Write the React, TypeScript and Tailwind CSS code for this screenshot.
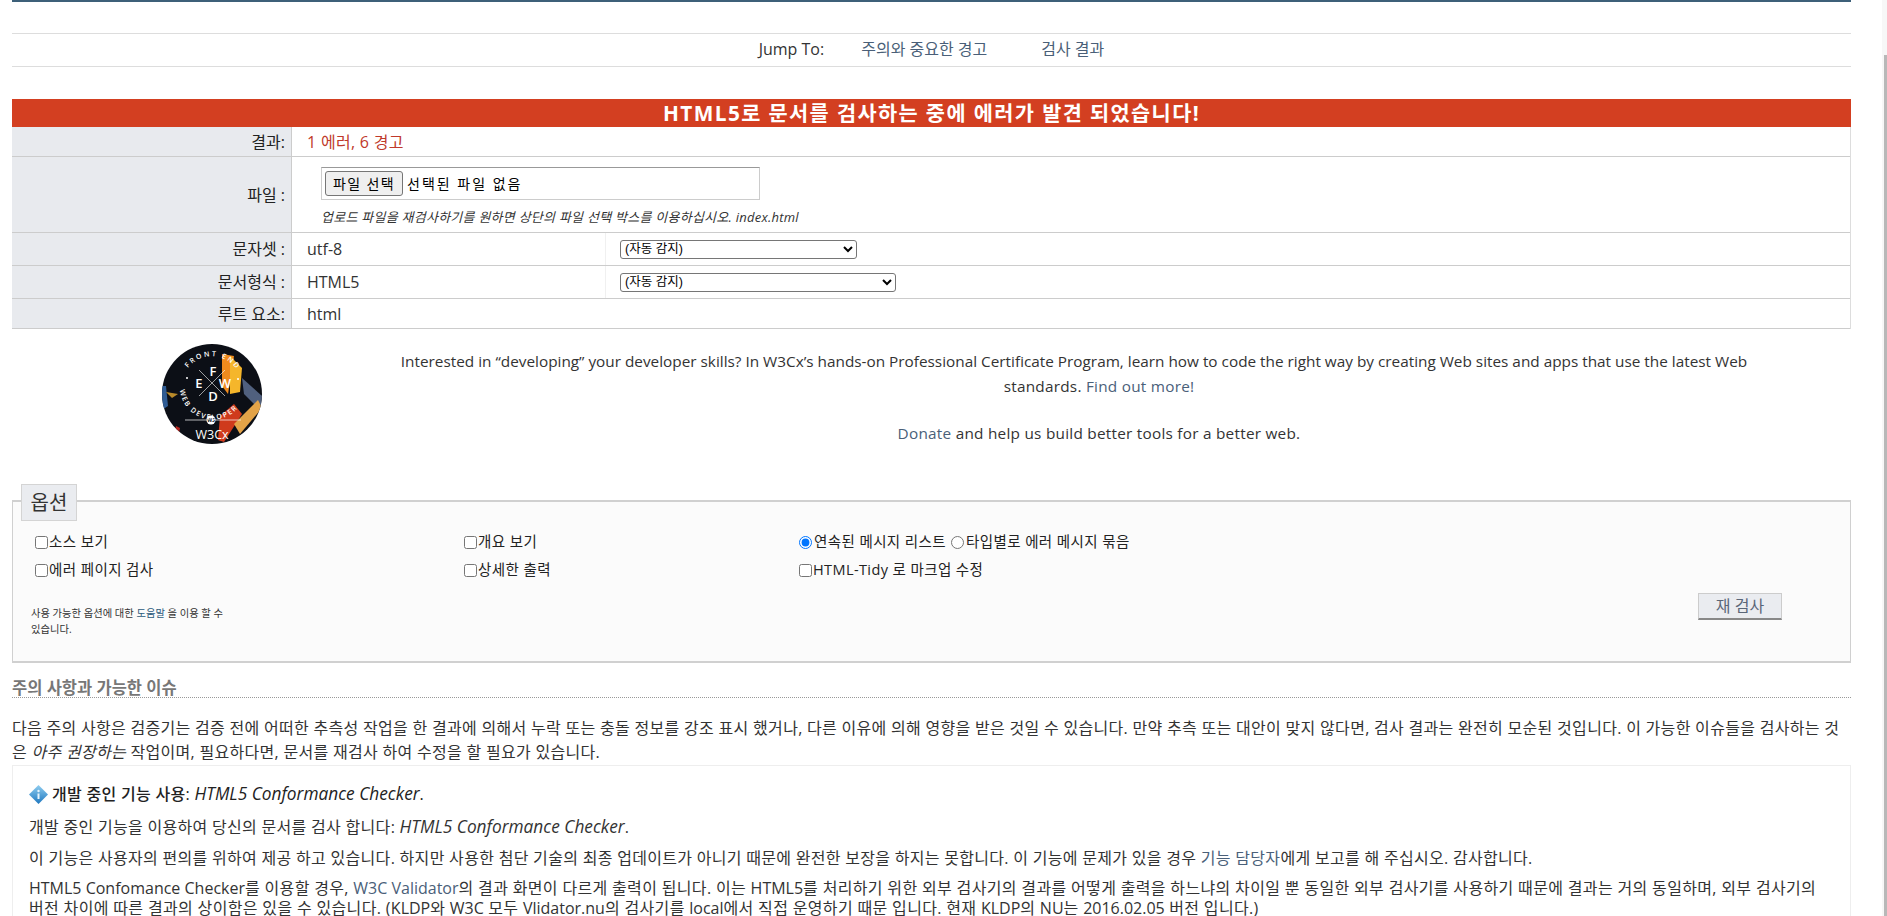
const font = "font-['Open_Sans','Noto_Sans_CJK_KR',sans-serif]";

function Row({ label, height, children }: { label: string; height: string; children: React.ReactNode }) {
  return (
    <div className={`flex border-b border-[#cccccc] ${height}`}>
      <div className="w-[280px] shrink-0 bg-[#e8eaee] border-r border-[#cccccc] flex items-center justify-end pr-[6px] text-[16px] text-[#222222]">
        {label}
      </div>
      <div className="flex-1 flex items-center text-[16px] text-[#333333]">{children}</div>
    </div>
  );
}

// latin runs inside the korean paragraphs sit at their own size
function Latin({ children }: { children: React.ReactNode }) {
  return <span className="text-[16px] tracking-normal">{children}</span>;
}

function Wide({ children }: { children: React.ReactNode }) {
  return <em className="text-[17.3px] tracking-normal">{children}</em>;
}

function Check({ children }: { children: React.ReactNode }) {
  return (
    <label className="flex items-center h-[16px] gap-[1px]">
      <input type="checkbox" className="w-[13px] h-[13px] m-0" />
      {children}
    </label>
  );
}

function Logo() {
  return (
    <svg width="100" height="100" viewBox="0 0 100 100">
      <defs>
        <clipPath id="c">
          <circle cx="50" cy="50" r="50" />
        </clipPath>
      </defs>
      <g clipPath="url(#c)">
        <rect width="100" height="100" fill="#0c0f16" />
        <polygon points="60,10 72,12 66,50 60,42" fill="#f08a1d" />
        <polygon points="68,12 80,24 78,48 68,50" fill="#f5b62b" />
        <polygon points="80,34 100,52 100,68 82,50" fill="#50607e" />
        <polygon points="58,72 72,60 80,70 62,98 56,96" fill="#cf3a1c" />
        <polygon points="72,80 96,56 100,64 78,90" fill="#e3a348" />
        <polygon points="0,42 4,42 6,62 0,66" fill="#2f5c94" />
        <polygon points="4,48 16,50 10,54" fill="#b98a2a" />
        <polygon points="14,82 18,84 16,94 12,92" fill="#b5241f" />
      </g>
      <line x1="37" y1="26" x2="63" y2="52" stroke="#ffffff" strokeWidth="0.6" />
      <line x1="63" y1="26" x2="37" y2="52" stroke="#ffffff" strokeWidth="0.6" />
      <line x1="23" y1="76" x2="79" y2="76" stroke="#ffffff" strokeWidth="0.7" />
      <circle cx="49" cy="76" r="4.5" fill="#ffffff" />
      <text x="49" y="78" fontSize="5" fontWeight="700" fontFamily="Open Sans" textAnchor="middle" fill="#0c0f16">W3</text>
      <circle cx="25" cy="34" r="1" fill="#ffffff" />
      <circle cx="76" cy="35" r="1" fill="#ffffff" />
      <g fill="#ffffff" fontFamily="Open Sans" fontWeight="600" textAnchor="middle">
        <text x="51" y="32" fontSize="13">F</text>
        <text x="37" y="44" fontSize="13">E</text>
        <text x="63" y="44" fontSize="13">W</text>
        <text x="51" y="57" fontSize="13">D</text>
        <text x="50" y="95" fontSize="12.5" fontWeight="400">W3Cx</text>
      </g>
      <path id="t" d="M 26 24 A 30 30 0 0 1 78 32" fill="none" />
      <path id="b" d="M 18 46 A 33 33 0 0 0 83 50" fill="none" />
      <text fill="#ffffff" fontFamily="Open Sans" fontWeight="600" fontSize="7" letterSpacing="2">
        <textPath href="#t">FRONT END</textPath>
      </text>
      <text fill="#ffffff" fontFamily="Open Sans" fontWeight="600" fontSize="7" letterSpacing="1.6">
        <textPath href="#b">WEB DEVELOPER</textPath>
      </text>
    </svg>
  );
}

export default function App() {
  return (
    <div className={`h-[916px] overflow-hidden bg-white flex ${font}`}>
      <div className="w-[1882px] px-[12px] shrink-0">
        <div className="w-[1839px]">
          <div className="h-[2px] bg-[#3d6079]" />
          <div className="mt-[31px] h-[34px] border-y border-[#dddddd] flex items-center justify-center text-[16px] pb-[2px]">
            <span className="text-[#333333] mr-[37px]">Jump To:</span>
            <a className="text-[#4a5f78] mr-[54px]">주의와 중요한 경고</a>
            <a className="text-[#4a5f78]">검사 결과</a>
          </div>

          <h2 className="mt-[32px] h-[28px] bg-[#d33f21] text-white font-bold text-[20.8px] tracking-[1.4px] text-center leading-[28px]">
            HTML5로 문서를 검사하는 중에 에러가 발견 되었습니다!
          </h2>
          <div className="border-r border-[#dddddd]">
            <Row label="결과:" height="h-[30px]">
              <span className="pl-[15px] text-[#c0392b] tracking-[0.3px]">1 에러, 6 경고</span>
            </Row>
            <Row label="파일 :" height="h-[76px]">
              <div className="pl-[29px] pt-[2px]">
                <div className="w-[439px] h-[33px] border border-[#cccccc] border-t-[#999999] flex items-center pl-[3px] text-[14px] text-black tracking-[1.4px]">
                  <span className="w-[78px] h-[25px] border border-[#767676] rounded-[3px] bg-[#efefef] flex items-center justify-center mr-[4px]">파일 선택</span>
                  <span className="tracking-[2px]">선택된 파일 없음</span>
                </div>
                <p className="mt-[9px] text-[13px] italic text-[#333333] leading-[16px] tracking-[0.25px]">
                  업로드 파일을 재검사하기를 원하면 상단의 파일 선택 박스를 이용하십시오. index.html
                </p>
              </div>
            </Row>
            <Row label="문자셋 :" height="h-[33px]">
              <div className="w-[314px] h-full pl-[15px] flex items-center border-r border-[#f0f0f0]">utf-8</div>
              <select className="ml-[14px] w-[237px] h-[19px] py-0 border border-[#767676] rounded-[3px] bg-white text-[12.5px] text-black font-['Liberation_Sans','Noto_Sans_CJK_KR',sans-serif]">
                <option>(자동 감지)</option>
              </select>
            </Row>
            <Row label="문서형식 :" height="h-[33px]">
              <div className="w-[314px] h-full pl-[15px] flex items-center border-r border-[#f0f0f0]">HTML5</div>
              <select className="ml-[14px] w-[276px] h-[19px] py-0 border border-[#767676] rounded-[3px] bg-white text-[12.5px] text-black font-['Liberation_Sans','Noto_Sans_CJK_KR',sans-serif]">
                <option>(자동 감지)</option>
              </select>
            </Row>
            <Row label="루트 요소:" height="h-[30px]">
              <span className="pl-[15px]">html</span>
            </Row>
          </div>

          <div className="flex h-[138px]">
            <div className="w-[310px] shrink-0 pl-[150px] pt-[15px]">
              <Logo />
            </div>
            <div className="flex-1 pl-[25px] pt-[20px] text-center text-[15.34px] leading-[25px] text-[#333333]">
              <span className="block mr-[50px]">
                Interested in “developing” your developer skills? In W3Cx’s hands-on Professional Certificate Program, learn how to code the right way by creating Web sites and apps that use the latest Web
              </span>
              <p className="tracking-[0.25px]">
                standards. <a className="text-[#4a6079]">Find out more!</a>
              </p>
              <p className="mt-[22px] tracking-[0.25px]">
                <a className="text-[#4a6079]">Donate</a> and help us build better tools for a better web.
              </p>
            </div>
          </div>

          <div className="relative mt-[33px] h-[163px] border border-[#d0d0d0] border-t-2 border-b-2 bg-[#fbfbfb] text-[14.5px] tracking-[0.4px] text-[#222222]">
            <div className="absolute left-[8px] top-[-18px] w-[56px] h-[37px] bg-[#eaecf0] border border-[#d4d4d4] flex items-center justify-center text-[20px] tracking-normal text-[#333333]">
              옵션
            </div>
            <div className="pt-[32px] pl-[22px] grid grid-cols-[429px_335px_1fr] gap-y-[12px]">
              <Check>소스 보기</Check>
              <Check>개요 보기</Check>
              <div className="flex items-center h-[16px] gap-[2px]">
                <input type="radio" name="g" defaultChecked className="w-[13px] h-[13px] m-0" />연속된 메시지 리스트
                <input type="radio" name="g" className="w-[13px] h-[13px] ml-[3px]" />타입별로 에러 메시지 묶음
              </div>
              <Check>에러 페이지 검사</Check>
              <Check>상세한 출력</Check>
              <Check>HTML-Tidy 로 마크업 수정</Check>
            </div>
            <div className="flex justify-between items-start pl-[18px] pr-[68px] mt-[15px]">
              <p className="w-[195px] mt-[12px] text-[10.3px] tracking-normal leading-[16px] text-[#333333] break-keep">
                사용 가능한 옵션에 대한 <a className="text-[#2c5a7c]">도움말</a> 을 이용 할 수 있습니다.
              </p>
              <button className="w-[84px] h-[27px] bg-[#eaecf0] border border-[#cccccc] border-b-2 border-b-[#888888] text-[16px] tracking-normal text-[#5a6678]">재 검사</button>
            </div>
          </div>

          <h3 className="mt-[15px] h-[20px] border-b border-dotted border-[#999999] text-[16.5px] font-semibold text-[#777777] leading-[20px]">
            주의 사항과 가능한 이슈
          </h3>
          <div className="text-[16px] tracking-[0.3px] text-[#333333]">
            <p className="mt-[18px] leading-[24px]">
              다음 주의 사항은 검증기는 검증 전에 어떠한 추측성 작업을 한 결과에 의해서 누락 또는 충돌 정보를 강조 표시 했거나, 다른 이유에 의해 영향을 받은 것일 수 있습니다. 만약 추측 또는 대안이 맞지 않다면, 검사 결과는 완전히 모순된 것입니다. 이 가능한 이슈들을 검사하는 것은 <em>아주 권장하는</em> 작업이며, 필요하다면, 문서를 재검사 하여 수정을 할 필요가 있습니다.
            </p>
            <div className="mt-[1px] border border-[#eeeeee] pl-[16px] pr-[30px] pt-[16px]">
              <div className="flex items-center text-[#222222] font-medium h-[24px]">
                <svg width="19" height="19" viewBox="0 0 19 19" className="mr-[4px]">
                  <defs>
                    <linearGradient id="d" x1="0" y1="0" x2="0" y2="1">
                      <stop offset="0" stopColor="#8fcdf0" />
                      <stop offset="1" stopColor="#1f78bf" />
                    </linearGradient>
                  </defs>
                  <polygon points="9.5,0 19,9.5 9.5,19 0,9.5" fill="url(#d)" />
                  <circle cx="9.5" cy="6" r="1.2" fill="#e6f4fc" />
                  <rect x="8.5" y="8.5" width="2" height="5.5" fill="#e6f4fc" />
                </svg>
                개발 중인 기능 사용:&nbsp;<Wide>HTML5 Conformance Checker</Wide>.
              </div>
              <p className="mt-[10px] leading-[22px]">개발 중인 기능을 이용하여 당신의 문서를 검사 합니다: <Wide>HTML5 Conformance Checker</Wide>.</p>
              <p className="mt-[9px] leading-[22px]">이 기능은 사용자의 편의를 위하여 제공 하고 있습니다. 하지만 사용한 첨단 기술의 최종 업데이트가 아니기 때문에 완전한 보장을 하지는 못합니다. 이 기능에 문제가 있을 경우 <a className="text-[#4a6079]">기능 담당자</a>에게 보고를 해 주십시오. 감사합니다.</p>
              <p className="mt-[9px] leading-[20px] tracking-[0.34px]"><Latin>HTML5 Confomance Checker</Latin>를 이용할 경우, <a className="text-[#4a6079]"><Latin>W3C Validator</Latin></a>의 결과 화면이 다르게 출력이 됩니다. 이는 <Latin>HTML5</Latin>를 처리하기 위한 외부 검사기의 결과를 어떻게 출력을 하느냐의 차이일 뿐 동일한 외부 검사기를 사용하기 때문에 결과는 거의 동일하며, 외부 검사기의 버전 차이에 따른 결과의 상이함은 있을 수 있습니다. (<Latin>KLDP</Latin>와 <Latin>W3C</Latin> 모두 <Latin>Vlidator.nu</Latin>의 검사기를 <Latin>local</Latin>에서 직접 운영하기 때문 입니다. 현재 <Latin>KLDP</Latin>의 <Latin>NU</Latin>는 <Latin>2016.02.05</Latin> 버전 입니다.)</p>
            </div>
          </div>
        </div>
      </div>
      <div className="flex-1 flex flex-col bg-[#f7f7f7]">
        <div className="h-[55px]" />
        <div className="flex-1 w-[3px] ml-auto bg-[#b8b8b8]" />
      </div>
    </div>
  );
}
